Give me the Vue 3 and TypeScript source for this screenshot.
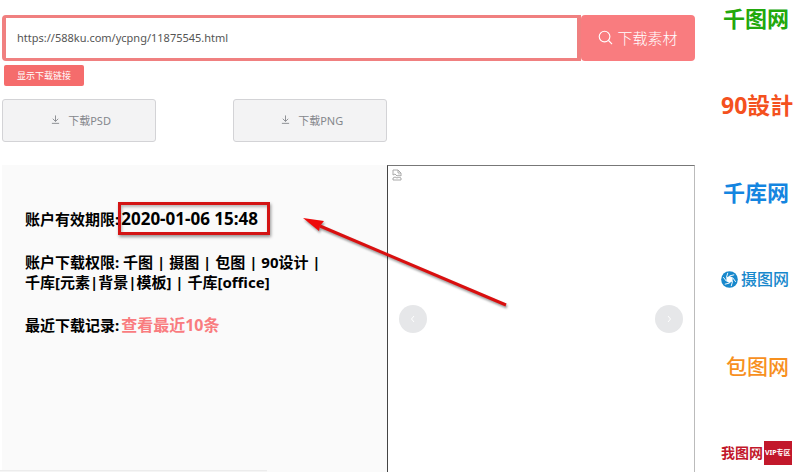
<script setup lang="ts">
import { ref } from 'vue'

interface Site {
  key: string
  name: string
  tag?: string
}

const link = ref<string>('https://588ku.com/ycpng/11875545.html')
const formats: string[] = ['PSD', 'PNG']
const sites: Site[] = [
  { key: 'qiantu', name: '千图网' },
  { key: 'ninety', name: '90設計' },
  { key: 'qianku', name: '千库网' },
  { key: 'shetu', name: '摄图网' },
  { key: 'baotu', name: '包图网' },
  { key: 'wotu', name: '我图网', tag: 'VIP专区' },
]
</script>

<template>
  <div class="page">
    <main class="main">
      <form class="search" @submit.prevent>
        <input v-model="link" class="search-input" type="text" aria-label="素材链接" />
        <button class="search-button" type="submit">
          <svg class="search-icon" viewBox="0 0 16 16" aria-hidden="true">
            <circle cx="7" cy="7" r="5.7" />
            <path d="M11.2 11.2 15 15" />
          </svg>
          下载素材
        </button>
      </form>
      <button class="show-link" type="button">显示下载链接</button>

      <div class="downloads">
        <button v-for="format in formats" :key="format" class="download" type="button">
          <svg class="download-icon" viewBox="0 0 10 10" aria-hidden="true">
            <path d="M5 .5v6.5M2 4.2l3 3 3-3M1 9.3h8" />
          </svg>
          下载{{ format }}
        </button>
      </div>

      <div class="panels">
        <section class="account">
          <p>账户有效期限:<span class="expiry">2020-01-06 15:48</span></p>
          <p>账户下载权限: 千图 | 摄图 | 包图 | 90设计 |<br />千库[元素|背景|模板] | 千库[office]</p>
          <p>最近下载记录:<a href="#recent">查看最近10条</a></p>
        </section>
        <section class="preview">
          <svg class="broken" viewBox="0 0 10 12" aria-hidden="true">
            <path d="M1 6V1h5l3 3v3M6 1v3h3M1 6l2-1 2 2 2-1 2 1M1 11V9l2-1 2 1 2-1 2 1v2z" />
          </svg>
          <div class="arrows">
            <button class="arrow" type="button" aria-label="上一张">
              <svg viewBox="0 0 10 10" aria-hidden="true"><path d="M6 2 3.5 5 6 8" /></svg>
            </button>
            <button class="arrow" type="button" aria-label="下一张">
              <svg viewBox="0 0 10 10" aria-hidden="true"><path d="M4 2 6.5 5 4 8" /></svg>
            </button>
          </div>
        </section>
      </div>
    </main>

    <nav class="sites">
      <a v-for="site in sites" :key="site.key" :class="['site', site.key]" :href="'#' + site.key">
        <svg v-if="site.key === 'shetu'" class="shutter" viewBox="0 0 18 18" aria-hidden="true">
          <circle cx="9" cy="9" r="8.8" fill="#1788cc" />
          <path d="M9 5.2 12.3 7v3.8L9 12.8 5.7 10.8V7z" fill="#fff" />
          <path
            d="M9 5.2 14 4M12.3 7l3.3 4.5M12.3 10.8 10.8 16M9 12.8 4 14M5.7 10.8 2.4 6.5M5.7 7 7.2 2"
            fill="none"
            stroke="#fff"
            stroke-width="1"
          />
        </svg>
        <span class="site-name">{{ site.name }}</span>
        <span v-if="site.tag" class="site-tag">{{ site.tag }}</span>
      </a>
    </nav>

    <svg class="pointer" viewBox="0 0 212 96" aria-hidden="true">
      <path d="M206 91 20 12" stroke="#d90f0f" stroke-width="3" />
      <path d="M3 4 24 7 20 12 19 17z" fill="#ee0a0a" />
    </svg>
    <div class="status"></div>
  </div>
</template>

<style>
body {
  margin: 0;
  background: #fff;
}
</style>

<style scoped>
.page {
  position: relative;
  display: flex;
  min-height: 100vh;
  overflow: hidden;
  font-family: 'Noto Sans', 'Noto Sans CJK SC', sans-serif;
}

button {
  font-family: inherit;
  cursor: pointer;
}

.main {
  flex: 1;
  display: flex;
  flex-direction: column;
  padding: 15px 0 0 2px;
}

.search {
  display: flex;
  height: 46px;
}

.search-input {
  flex: 1;
  min-width: 0;
  box-sizing: border-box;
  padding: 0 11px 2px;
  border: solid #f08080;
  border-width: 3px 4px;
  border-radius: 4px 0 0 4px;
  background: #fff;
  color: #555;
  font-family: inherit;
  font-size: 11px;
  outline: none;
}

.search-button {
  display: flex;
  align-items: center;
  justify-content: center;
  gap: 4px;
  width: 114px;
  padding: 0 0 2px;
  border: 0;
  border-radius: 4px;
  background: #f97c7f;
  color: #fff;
  font-size: 15px;
  font-weight: 300;
}

.search-icon {
  width: 15px;
  height: 15px;
  fill: none;
  stroke: #fff;
  stroke-width: 1.2;
}

.show-link {
  align-self: flex-start;
  width: 80px;
  height: 21px;
  margin: 4px 0 0 2px;
  padding: 0;
  border: 0;
  border-radius: 2px;
  background: #f56c6c;
  color: #fff;
  font-size: 9px;
  line-height: 21px;
}

.downloads {
  display: flex;
  justify-content: space-between;
  width: 55.6%;
  margin-top: 13px;
}

.download {
  display: flex;
  align-items: center;
  justify-content: center;
  gap: 8px;
  width: 40%;
  height: 43px;
  padding: 0 4px 2px 8px;
  border: 1px solid #d3d3d6;
  border-radius: 3px;
  background: #f3f3f4;
  color: #85878c;
  font-size: 11px;
}

.download-icon {
  width: 9px;
  height: 9px;
  fill: none;
  stroke: #85878c;
  stroke-width: 1;
}

.panels {
  flex: 1;
  display: grid;
  grid-template-columns: 5fr 4fr;
  margin-top: 23px;
}

.account {
  display: flex;
  flex-direction: column;
  gap: 23px;
  padding: 44px 0 0 23px;
  background: #fafafa;
  color: #000;
  font-size: 15px;
  font-weight: 700;
  line-height: 20px;
  white-space: nowrap;
}

.account p {
  margin: 0;
}

.account a {
  margin-left: 2px;
  color: #f97c7f;
  font-size: 16px;
  text-decoration: none;
}

.expiry {
  position: relative;
  margin-left: 2px;
  font-size: 17px;
}

.expiry::after {
  content: '';
  position: absolute;
  inset: -5px -12px -5px -3px;
  border: 3px solid #d31414;
  box-shadow: 1px 2px 3px #0006, inset 1px 2px 3px #0004;
}

.preview {
  display: flex;
  flex-direction: column;
  border: solid #444;
  border-width: 1px 1px 0;
  border-color: #777 #bbb #777 #444;
}

.broken {
  width: 10px;
  height: 12px;
  margin: 3px 0 0 4px;
  fill: none;
  stroke: #aaa;
  stroke-width: 1;
}

.arrows {
  display: flex;
  justify-content: space-between;
  margin-top: 124px;
  padding: 0 11px;
}

.arrow {
  display: grid;
  place-items: center;
  width: 28px;
  height: 28px;
  padding: 0;
  border: 0;
  border-radius: 50%;
  background: #e6e7e9;
}

.arrow svg {
  width: 10px;
  height: 10px;
  fill: none;
  stroke: #fff;
}

.sites {
  display: flex;
  flex-direction: column;
  gap: 63px;
  width: 79px;
  padding: 6px 0 0 26px;
}

.site {
  display: flex;
  align-items: center;
  height: 24px;
  text-decoration: none;
  white-space: nowrap;
  font-size: 22px;
  font-weight: 700;
  line-height: 24px;
}

.qiantu {
  padding-left: 2px;
  color: #22a80c;
}

.ninety {
  color: #f4511e;
  font-size: 23px;
}

.qianku {
  padding-left: 2px;
  color: #1485e0;
}

.shetu {
  gap: 3px;
  color: #1788cc;
  font-size: 16px;
  font-weight: 500;
}

.shutter {
  width: 17px;
  height: 17px;
}

.baotu {
  padding-left: 5px;
  color: #f7901e;
  font-size: 21px;
  font-weight: 500;
}

.wotu {
  gap: 1px;
  color: #c2182b;
  font-size: 14px;
}

.site-tag {
  padding: 0 1px;
  background: #c2182b;
  color: #fff;
  font-size: 7px;
}

.pointer {
  position: absolute;
  left: 300px;
  top: 214px;
  width: 212px;
  height: 96px;
  fill: none;
  filter: drop-shadow(1px 2px 1px #0006);
  pointer-events: none;
}

.status {
  position: absolute;
  left: 0;
  bottom: 0;
  width: 267px;
  height: 1px;
  border-top: 1px solid #ececec;
  background: #f5f5f5;
}
</style>
